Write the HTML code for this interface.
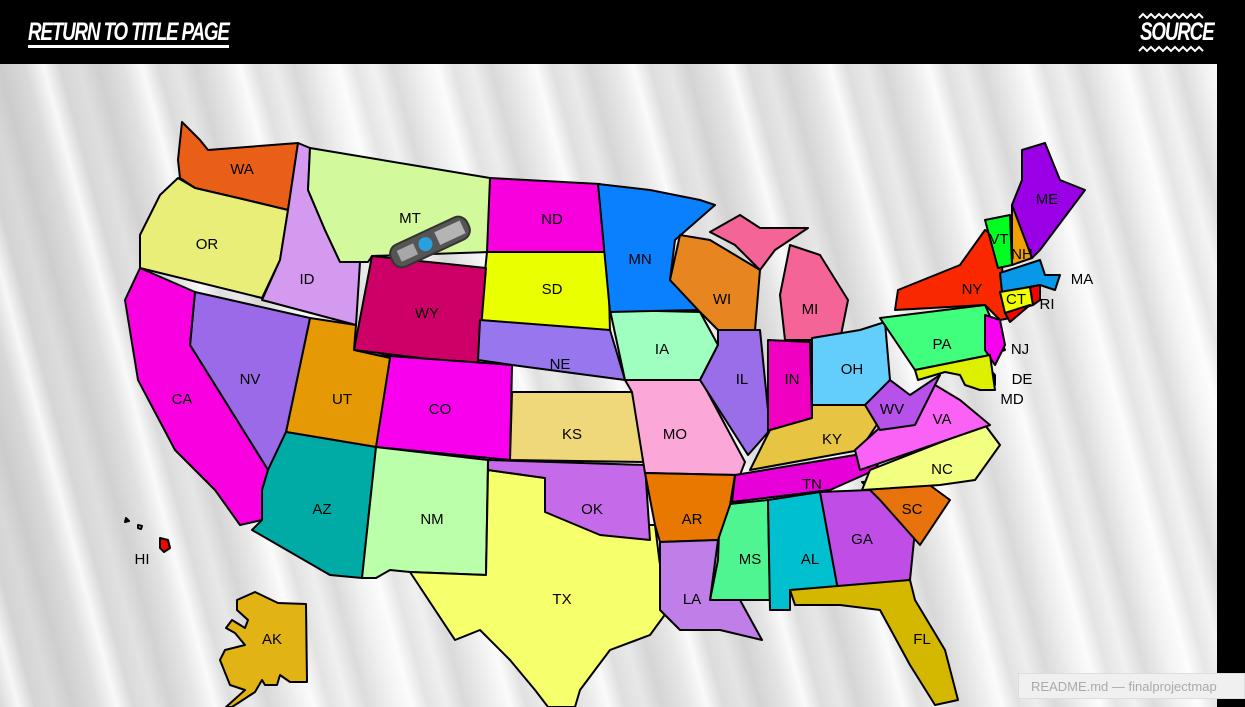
<!DOCTYPE html>
<html><head><meta charset="utf-8"><style>
html,body{margin:0;padding:0;width:1245px;height:707px;overflow:hidden;background:#000;}
#hdr{position:absolute;left:0;top:0;width:1245px;height:64px;background:#000;}
.t{position:absolute;color:#fff;font-family:"Liberation Sans",sans-serif;font-weight:bold;font-style:italic;font-size:25px;letter-spacing:-1.5px;transform:scaleX(0.75);transform-origin:left top;}
#map{position:absolute;left:0;top:64px;width:1217px;height:643px;
background:
repeating-linear-gradient(75deg,rgba(255,255,255,0) 0px,rgba(255,255,255,.8) 18px,rgba(200,200,200,.3) 34px,rgba(255,255,255,0) 52px,rgba(180,180,180,.35) 70px,rgba(255,255,255,0) 95px),
linear-gradient(90deg,#d8d8d8,#f2f2f2 30%,#e4e4e4 60%,#f4f4f4);}
svg{position:absolute;left:0;top:0}
svg polygon{stroke:#000;stroke-width:2;stroke-linejoin:round}
svg text{font-family:"Liberation Sans",sans-serif;font-size:15px;fill:#000;text-anchor:middle}
#tip{position:absolute;left:1018px;top:673px;width:227px;height:26px;background:#f0f0f0;border:1px solid #ddd;color:#aaa;font:13px "Liberation Sans",sans-serif;line-height:26px;padding-left:12px;box-sizing:border-box}
</style></head><body>
<div id="hdr"></div>
<div class="t" style="left:28px;top:20px;border-bottom:3px solid #fff;line-height:25px">RETURN TO TITLE PAGE</div>
<div class="t" style="left:1140px;top:20px;line-height:25px">SOURCE</div>
<svg width="1245" height="64" style="position:absolute;left:0;top:0"><polyline points="1139,18 1143,14 1147,18 1151,14 1155,18 1159,14 1163,18 1167,14 1171,18 1175,14 1179,18 1183,14 1187,18 1191,14 1195,18 1199,14 1203,18" fill="none" stroke="#fff" stroke-width="2"/><polyline points="1139,51 1143,47 1147,51 1151,47 1155,51 1159,47 1163,51 1167,47 1171,51 1175,47 1179,51 1183,47 1187,51 1191,47 1195,51 1199,47 1203,51" fill="none" stroke="#fff" stroke-width="2"/></svg>
<div id="map"></div>
<svg width="1245" height="707">
<polygon fill="#ea5f17" points="182,122 200,140 208,150 298,143 288,210 238,198 195,188 180,178 178,160"/>
<polygon fill="#e8ee78" points="178,178 195,188 238,198 288,210 280,260 262,298 140,268 140,235 160,195"/>
<polygon fill="#d49af0" points="298,143 310,148 308,190 325,230 340,262 360,262 356,325 262,300 280,260 288,210"/>
<polygon fill="#d2f99c" points="310,148 490,178 490,252 372,256 368,262 340,262 325,230 308,190"/>
<polygon fill="#f800dd" points="490,178 600,184 608,252 487,252"/>
<polygon fill="#eaff00" points="487,252 608,252 610,332 480,320"/>
<polygon fill="#cc0066" points="372,256 486,268 478,365 354,350"/>
<polygon fill="#9776ee" points="480,320 610,330 625,380 512,365 478,360"/>
<polygon fill="#f800ee" points="376,355 512,365 510,460 376,447"/>
<polygon fill="#e59a05" points="310,318 356,325 354,350 390,358 376,447 286,432"/>
<polygon fill="#9a6ae8" points="195,292 310,318 286,432 268,470 190,345"/>
<polygon fill="#f800e0" points="140,268 195,292 190,345 268,470 262,490 262,520 240,525 215,490 175,450 138,380 125,300"/>
<polygon fill="#00aba6" points="286,432 376,447 362,578 330,575 252,530 262,520 262,490 268,470"/>
<polygon fill="#bbffaa" points="376,447 488,460 486,575 410,572 390,570 376,578 362,578"/>
<polygon fill="#f6ff6c" points="488,470 545,478 545,510 600,525 655,525 660,565 672,605 650,635 610,650 580,690 575,707 548,707 535,690 510,660 480,630 455,640 410,572 486,575"/>
<polygon fill="#c56ae8" points="488,460 645,465 650,540 600,535 545,512 545,478 488,470"/>
<polygon fill="#efd87a" points="512,392 632,392 645,462 510,460"/>
<polygon fill="#fba8d8" points="625,380 700,378 745,462 740,475 645,473 632,392"/>
<polygon fill="#9effc0" points="610,310 700,312 718,345 700,380 625,380"/>
<polygon fill="#0b80ff" points="598,184 650,190 700,200 715,205 675,240 670,280 698,310 610,312"/>
<polygon fill="#e78520" points="680,235 710,240 760,270 755,330 718,330 700,312 670,280"/>
<polygon fill="#9a6ee8" points="718,330 760,330 770,430 748,455 700,380 718,345"/>
<polygon fill="#f000c0" points="768,340 810,342 812,418 768,432"/>
<polygon fill="#f56496" points="710,232 740,215 760,228 808,228 775,250 760,270 735,245"/>
<polygon fill="#f56496" points="790,245 820,255 848,300 840,340 785,340 780,295"/>
<polygon fill="#63cdfc" points="812,338 860,330 885,322 890,380 870,405 812,405"/>
<polygon fill="#e7c442" points="770,430 812,418 812,405 870,405 880,420 860,450 750,470"/>
<polygon fill="#e800d8" points="735,475 885,450 875,470 830,490 732,502"/>
<polygon fill="#4ef590" points="720,505 768,500 770,600 740,600 710,600 718,560"/>
<polygon fill="#00c0d0" points="768,500 820,492 838,590 790,590 790,610 770,610"/>
<polygon fill="#c04ee6" points="820,492 870,490 915,530 910,580 838,590"/>
<polygon fill="#d4b800" points="790,590 910,580 915,600 945,650 958,700 935,705 910,665 880,610 840,605 795,605"/>
<polygon fill="#e8720c" points="862,482 920,478 950,500 920,545 880,500"/>
<polygon fill="#f2ff80" points="870,470 985,425 1000,445 975,480 940,485 862,490"/>
<polygon fill="#fa62f5" points="855,450 905,405 935,385 960,400 990,425 860,470"/>
<polygon fill="#b652ea" points="865,405 890,380 910,395 940,375 915,425 880,430"/>
<polygon fill="#40ff7c" points="880,318 985,305 1005,350 990,355 915,370"/>
<polygon fill="#fa2800" points="898,290 960,265 985,230 1000,240 1005,305 1010,318 1000,320 985,305 895,310"/>
<polygon fill="#00ff20" points="985,220 1010,215 1012,265 998,268"/>
<polygon fill="#f0a000" points="1012,205 1022,228 1032,258 1012,265"/>
<polygon fill="#9a00e6" points="1022,150 1045,143 1060,180 1085,190 1040,250 1032,258 1012,205 1022,180"/>
<polygon fill="#0898e8" points="1000,273 1040,260 1045,275 1060,275 1055,290 1040,285 1002,292"/>
<polygon fill="#f0ff00" points="1000,292 1030,287 1033,305 1005,313"/>
<polygon fill="#f80000" points="1030,287 1040,285 1040,300 1033,305"/>
<polygon fill="#f80000" points="1005,313 1030,305 1010,322"/>
<polygon fill="#f800f0" points="985,315 1000,320 1005,345 995,365 985,350"/>
<polygon fill="#f80000" points="983,362 995,375 995,385 985,383"/>
<polygon fill="#dcf000" points="915,370 990,355 995,390 980,390 965,385 960,375 945,372 918,380"/>
<polygon fill="#e87800" points="645,473 735,475 730,505 718,540 660,542 655,525"/>
<polygon fill="#c07ee8" points="660,542 718,540 710,600 740,600 762,640 720,630 680,630 660,610"/>
<polygon fill="#e2b315" points="237,600 255,592 278,603 306,604 307,682 290,682 280,675 277,685 265,685 262,680 255,692 232,707 226,707 245,690 230,685 222,665 220,660 225,650 245,645 235,633 226,628 232,620 245,628 248,620 237,610"/>
<polygon fill="#f00" points="160,538 168,540 170,548 164,552 160,548"/>
<polygon fill="#fff" points="138,525 142,526 141,529 138,528"/>
<polygon fill="#000" points="126,518 129,521 125,522"/>
<g transform="translate(430,242) rotate(-25)"><rect x="-42" y="-12" width="84" height="24" rx="10" fill="#555" stroke="#333" stroke-width="2"/><circle cx="-5" cy="0" r="7" fill="#29a0e0"/><rect x="8" y="-7" width="28" height="14" fill="#ccc" opacity=".8"/><rect x="-34" y="-6" width="18" height="12" fill="#bbb" opacity=".8"/></g>
<text x="242" y="174">WA</text><text x="207" y="249">OR</text><text x="307" y="284">ID</text><text x="410" y="223">MT</text>
<text x="552" y="224">ND</text><text x="552" y="294">SD</text><text x="427" y="318">WY</text><text x="560" y="369">NE</text>
<text x="440" y="414">CO</text><text x="342" y="404">UT</text><text x="250" y="384">NV</text><text x="182" y="404">CA</text>
<text x="322" y="514">AZ</text><text x="432" y="524">NM</text><text x="562" y="604">TX</text><text x="592" y="514">OK</text>
<text x="572" y="439">KS</text><text x="675" y="439">MO</text><text x="662" y="354">IA</text><text x="640" y="264">MN</text>
<text x="722" y="304">WI</text><text x="742" y="384">IL</text><text x="792" y="384">IN</text><text x="810" y="314">MI</text>
<text x="852" y="374">OH</text><text x="832" y="444">KY</text><text x="812" y="489">TN</text><text x="750" y="564">MS</text>
<text x="810" y="564">AL</text><text x="862" y="544">GA</text><text x="922" y="644">FL</text><text x="912" y="514">SC</text>
<text x="942" y="474">NC</text><text x="942" y="424">VA</text><text x="892" y="414">WV</text><text x="942" y="349">PA</text>
<text x="972" y="294">NY</text><text x="999" y="244">VT</text><text x="1022" y="259">NH</text><text x="1047" y="204">ME</text>
<text x="1082" y="284">MA</text><text x="1016" y="304">CT</text><text x="1047" y="309">RI</text><text x="1020" y="354">NJ</text>
<text x="1022" y="384">DE</text><text x="1012" y="404">MD</text><text x="692" y="524">AR</text><text x="692" y="604">LA</text>
<text x="272" y="644">AK</text><text x="142" y="564">HI</text>
</svg>
<div id="tip">README.md — finalprojectmap</div>
</body></html>
